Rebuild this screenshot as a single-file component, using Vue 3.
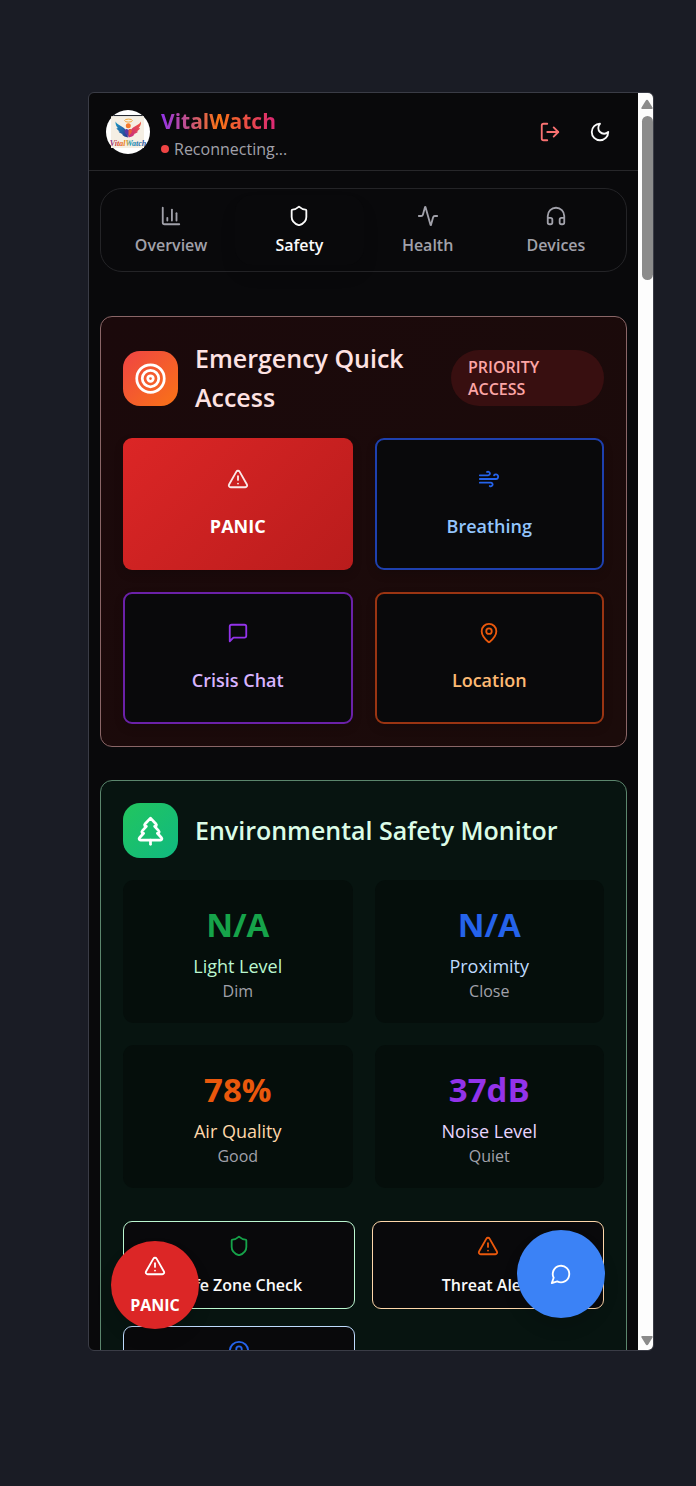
<script setup>
import { h, ref } from 'vue'

const paths = {
  chart: ['M3 3v16a2 2 0 0 0 2 2h16', 'M18 17V9', 'M13 17V5', 'M8 17v-3'],
  shield: ['M20 13c0 5-3.5 7.5-7.66 8.95a1 1 0 0 1-.67-.01C7.5 20.5 4 18 4 13V6a1 1 0 0 1 1-1c2 0 4.5-1.2 6.24-2.72a1.17 1.17 0 0 1 1.52 0C14.51 3.81 17 5 19 5a1 1 0 0 1 1 1z'],
  activity: ['M22 12h-2.48a2 2 0 0 0-1.93 1.46l-2.35 8.36a.25.25 0 0 1-.48 0L9.24 2.18a.25.25 0 0 0-.48 0l-2.35 8.36A2 2 0 0 1 4.49 12H2'],
  headphones: ['M3 14h3a2 2 0 0 1 2 2v3a2 2 0 0 1-2 2H5a2 2 0 0 1-2-2v-7a9 9 0 0 1 18 0v7a2 2 0 0 1-2 2h-1a2 2 0 0 1-2-2v-3a2 2 0 0 1 2-2h3'],
  target: ['M2 12a10 10 0 1 0 20 0a10 10 0 1 0-20 0', 'M6 12a6 6 0 1 0 12 0a6 6 0 1 0-12 0', 'M10 12a2 2 0 1 0 4 0a2 2 0 1 0-4 0'],
  tree: ['m17 14 3 3.3a1 1 0 0 1-.7 1.7H4.7a1 1 0 0 1-.7-1.7L7 14h-.3a1 1 0 0 1-.7-1.7L9 9h-.2A1 1 0 0 1 8 7.3L12 3l4 4.3a1 1 0 0 1-.8 1.7H15l3 3.3a1 1 0 0 1-.7 1.7H17Z', 'M12 22v-3'],
  wind: ['M12.8 19.6A2 2 0 1 0 14 16H2', 'M17.5 8a2.5 2.5 0 1 1 2 4H2', 'M9.8 4.4A2 2 0 1 1 11 8H2'],
  message: ['M21 15a2 2 0 0 1-2 2H7l-4 4V5a2 2 0 0 1 2-2h14a2 2 0 0 1 2 2z'],
  pin: ['M20 10c0 4.993-5.539 10.193-7.399 11.799a1 1 0 0 1-1.202 0C9.539 20.193 4 14.993 4 10a8 8 0 0 1 16 0', 'M9 10a3 3 0 1 0 6 0a3 3 0 1 0-6 0'],
  alert: ['m21.73 18-8-14a2 2 0 0 0-3.48 0l-8 14A2 2 0 0 0 4 21h16a2 2 0 0 0 1.73-3', 'M12 9v4', 'M12 17h.01'],
  bubble: ['M7.9 20A9 9 0 1 0 4 16.1L2 22Z'],
  logout: ['M9 21H5a2 2 0 0 1-2-2V5a2 2 0 0 1 2-2h4', 'm16 17 5-5-5-5', 'M21 12H9'],
  moon: ['M12 3a6 6 0 0 0 9 9 9 9 0 1 1-9-9Z'],
  user: ['M2 12a10 10 0 1 0 20 0a10 10 0 1 0-20 0', 'M9 10a3 3 0 1 0 6 0a3 3 0 1 0-6 0', 'M7 20.7V19a2 2 0 0 1 2-2h6a2 2 0 0 1 2 2v1.7'],
}

const Icon = (props) =>
  h(
    'svg',
    {
      viewBox: '0 0 24 24',
      width: props.size || 22,
      height: props.size || 22,
      fill: 'none',
      stroke: 'currentColor',
      'stroke-width': 2,
      'stroke-linecap': 'round',
      'stroke-linejoin': 'round',
      'aria-hidden': 'true',
    },
    paths[props.name].map((d) => h('path', { d })),
  )
Icon.props = ['name', 'size']

const active = ref('Safety')
const tabs = [
  { label: 'Overview', icon: 'chart' },
  { label: 'Safety', icon: 'shield' },
  { label: 'Health', icon: 'activity' },
  { label: 'Devices', icon: 'headphones' },
]
const actions = [
  { label: 'PANIC', icon: 'alert', tone: 'panic' },
  { label: 'Breathing', icon: 'wind', tone: 'blue' },
  { label: 'Crisis Chat', icon: 'message', tone: 'purple' },
  { label: 'Location', icon: 'pin', tone: 'orange' },
]
const stats = [
  { value: 'N/A', label: 'Light Level', note: 'Dim', tone: 'green' },
  { value: 'N/A', label: 'Proximity', note: 'Close', tone: 'blue' },
  { value: '78%', label: 'Air Quality', note: 'Good', tone: 'orange' },
  { value: '37dB', label: 'Noise Level', note: 'Quiet', tone: 'purple' },
]
</script>

<template>
  <div class="page">
    <div class="frame">
      <div class="screen">
        <header class="topbar">
          <svg class="logo" viewBox="0 0 44 44" role="img" aria-label="VitalWatch logo">
            <defs>
              <linearGradient id="lw" x1="0" y1="0" x2="1" y2="1">
                <stop offset="0" stop-color="#1e9bc4" /><stop offset="1" stop-color="#27368f" />
              </linearGradient>
              <linearGradient id="rw" x1="1" y1="0" x2="0" y2="1">
                <stop offset="0" stop-color="#f4573c" /><stop offset="1" stop-color="#c42a86" />
              </linearGradient>
              <linearGradient id="wm" x1="0" y1="0" x2="1" y2="0">
                <stop offset="0" stop-color="#7a3295" /><stop offset=".25" stop-color="#e0502c" />
                <stop offset=".45" stop-color="#ee9a24" /><stop offset=".55" stop-color="#1f9ab8" />
                <stop offset="1" stop-color="#2f4a9c" />
              </linearGradient>
            </defs>
            <circle cx="22" cy="22" r="22" fill="#fff" />
            <path d="M8 5h28l1 1.200H7z" fill="#262a33" />
            <path d="M5 6.200h33V38H5z" fill="#f5efe4" />
            <ellipse cx="22.500" cy="10.600" rx="3.800" ry="1.500" fill="none" stroke="#f2a93b" />
            <circle cx="22.300" cy="15.800" r="2.500" fill="#f47a2c" />
            <path d="M9.500 11.500c2 3.500 6 4 9 7 2 2 3 5 3.500 9-2.500-.3-5-1.500-6-3l1-.5c-2-.3-3.800-1.200-4.500-2.500l1.500-.2c-2-.7-3.200-2-3.500-3.300l1.500.2c-1.700-1.700-2.700-4-2.500-6.700z" fill="url(#lw)" />
            <path d="M35 11.500c-2 3.500-6 4-9 7-2 2-3 5-3.500 9 2.500-.3 5-1.500 6-3l-1-.5c2-.3 3.800-1.200 4.500-2.500l-1.500-.2c2-.7 3.200-2 3.500-3.300l-1.500.2c1.700-1.700 2.700-4 2.500-6.700z" fill="url(#rw)" />
            <path d="M22.300 20c2-2.200 4.200 0 3.300 2.200-.7 1.700-2.300 2.600-3.300 4.800-1-2.200-3-3-3.600-4.800-.7-2.200 1.600-4.400 3.600-2.200z" fill="#5a3aa5" />
            <path d="M22.500 20c2-2.200 4.200 0 3.300 2.200-.7 1.700-2.300 2.600-3.300 4.800z" fill="#ef5b3a" />
            <text x="22" y="36" text-anchor="middle" class="logo-text" fill="url(#wm)">VitalWatch</text>
          </svg>
          <div class="brand">
            <h1 class="brand-name">VitalWatch</h1>
            <p class="status"><span class="dot"></span>Reconnecting...</p>
          </div>
          <button class="icon-btn logout" type="button" aria-label="Log out"><Icon name="logout" /></button>
          <button class="icon-btn" type="button" aria-label="Toggle theme"><Icon name="moon" /></button>
        </header>

        <main class="content">
          <nav class="tabs" aria-label="Sections">
            <button
              v-for="t in tabs"
              :key="t.label"
              type="button"
              class="tab"
              :class="{ active: active === t.label }"
              @click="active = t.label"
            >
              <Icon :name="t.icon" />
              <span>{{ t.label }}</span>
            </button>
          </nav>

          <section class="card emergency">
            <div class="card-head">
              <span class="badge-icon"><Icon name="target" :size="33" /></span>
              <h2 class="card-title">Emergency Quick Access</h2>
              <span class="pill">PRIORITY ACCESS</span>
            </div>
            <div class="grid">
              <button v-for="a in actions" :key="a.label" type="button" class="action" :class="a.tone">
                <Icon :name="a.icon" />
                <span class="action-label">{{ a.label }}</span>
              </button>
            </div>
          </section>

          <section class="card environment">
            <div class="card-head">
              <span class="badge-icon"><Icon name="tree" :size="33" /></span>
              <h2 class="card-title">Environmental Safety Monitor</h2>
            </div>
            <div class="grid">
              <div v-for="s in stats" :key="s.label" class="stat" :class="s.tone">
                <div class="stat-value">{{ s.value }}</div>
                <div class="stat-label">{{ s.label }}</div>
                <div class="stat-note">{{ s.note }}</div>
              </div>
            </div>
            <div class="checks">
              <button type="button" class="check green"><Icon name="shield" /><span>Safe Zone Check</span></button>
              <button type="button" class="check orange"><Icon name="alert" /><span>Threat Alert</span></button>
              <button type="button" class="check blue" aria-label="Contacts"><Icon name="user" /><span></span></button>
            </div>
          </section>
        </main>

        <button type="button" class="float float-panic"><Icon name="alert" /><span>PANIC</span></button>
        <button type="button" class="float float-chat" aria-label="Open chat"><Icon name="bubble" /></button>
      </div>

      <div class="scrollbar" aria-hidden="true">
        <svg class="arrow" viewBox="0 0 12 10"><path d="M1 10Q0 10 .5 8.500L4.500 2Q6-.5 7.500 2L11.500 8.500Q12 10 11 10z" fill="#8b8b8b" /></svg>
        <div class="thumb"></div>
        <svg class="arrow down" viewBox="0 0 12 10"><path d="M1 0Q0 0 .5 1.500L4.500 8Q6 10.500 7.500 8L11.500 1.500Q12 0 11 0z" fill="#8b8b8b" /></svg>
      </div>
    </div>
  </div>
</template>

<style>
body {
  margin: 0;
  background: #1a1c25;
}
</style>

<style scoped>
.page {
  box-sizing: border-box;
  height: 100vh;
  padding: 92px 42px 135px 88px;
  background: #1a1c25;
  font-family: "Open Sans", "Noto Sans", sans-serif;
  color: #fafafa;
}
.page * {
  box-sizing: border-box;
}
h1, h2, p {
  margin: 0;
}
button {
  margin: 0;
  padding: 0;
  border: 0;
  background: none;
  color: inherit;
  font: inherit;
  cursor: pointer;
}
.page svg {
  display: block;
  flex: none;
}
.frame {
  display: flex;
  height: 100%;
  border: 1px solid #3a3c46;
  border-radius: 6px;
  overflow: hidden;
  background: #09090b;
}
.screen {
  position: relative;
  flex: 1;
  min-width: 0;
  overflow: hidden;
}
.scrollbar {
  display: flex;
  flex-direction: column;
  align-items: flex-end;
  width: 15px;
  padding: 6px 0 4px;
  background: #fdfdfd;
}
.arrow {
  width: 12px;
  height: 10px;
}
.arrow.down {
  margin-top: auto;
}
.thumb {
  width: 11px;
  height: 164px;
  margin-top: 7px;
  border-radius: 6px;
  background: #8b8b8b;
}

.topbar {
  display: flex;
  align-items: center;
  height: 78px;
  padding: 0 16px 0 17px;
  border-bottom: 1px solid #27272a;
}
.logo {
  width: 44px;
  height: 44px;
}
.logo-text {
  font: italic 700 8px "Liberation Serif", serif;
}
.brand {
  flex: 1;
  margin-left: 11px;
  padding-top: 3px;
}
.brand-name {
  width: max-content;
  font-size: 21px;
  line-height: 30px;
  font-weight: 700;
  background: linear-gradient(90deg, #9333ea, #f97316 50%, #db2777);
  background-clip: text;
  -webkit-background-clip: text;
  color: transparent;
}
.status {
  display: flex;
  align-items: center;
  gap: 5px;
  margin-top: 1px;
  font-size: 16px;
  line-height: 24px;
  color: #a1a1aa;
}
.dot {
  width: 8px;
  height: 8px;
  border-radius: 50%;
  background: #ef4444;
}
.icon-btn {
  display: grid;
  place-items: center;
  width: 44px;
  height: 44px;
}
.icon-btn + .icon-btn {
  margin-left: 6px;
}
.logout {
  color: #f87171;
}

.content {
  padding: 17px 11px;
}
.tabs {
  display: grid;
  grid-template-columns: repeat(4, 1fr);
  height: 84px;
  margin-bottom: 44px;
  padding: 6px;
  border: 1px solid #242427;
  border-radius: 22px;
}
.tab {
  display: flex;
  flex-direction: column;
  align-items: center;
  justify-content: center;
  gap: 7px;
  border-radius: 17px;
  font-size: 16px;
  line-height: 22px;
  font-weight: 600;
  color: #a1a1aa;
}
.tab.active {
  color: #fafafa;
  background: #09090b;
  box-shadow: 0 10px 16px rgba(0, 0, 0, 0.1);
}

.card {
  padding: 22px;
  border: 1px solid;
  border-radius: 12px;
}
.card + .card {
  margin-top: 33px;
}
.emergency {
  border-color: #8a6667;
  background: linear-gradient(135deg, #1b090b, #1b0b0a);
}
.environment {
  min-height: 900px;
  border-color: #5b866d;
  background: #071410;
}
.card-head {
  display: flex;
  align-items: center;
  margin-bottom: 22px;
}
.emergency .card-head {
  margin-bottom: 21px;
}
.badge-icon {
  display: grid;
  place-items: center;
  flex: none;
  width: 55px;
  height: 55px;
  margin-right: 17px;
  border-radius: 17px;
  color: #fff;
}
.emergency .badge-icon {
  background: linear-gradient(135deg, #ef4444, #f97316);
}
.environment .badge-icon {
  background: linear-gradient(135deg, #22c55e, #10b981);
}
.card-title {
  flex: 1;
  font-size: 25px;
  line-height: 39px;
  font-weight: 600;
}
.emergency .card-title {
  color: #fee2e2;
}
.environment .card-title {
  color: #dcfce7;
}
.pill {
  flex: 0 0 153px;
  padding: 6px 17px;
  border-radius: 28px;
  background: #380f10;
  color: #fca5a5;
  font-size: 16px;
  line-height: 22px;
  font-weight: 600;
}
.grid {
  display: grid;
  grid-template-columns: 1fr 1fr;
  gap: 22px;
}
.action {
  display: flex;
  flex-direction: column;
  align-items: center;
  justify-content: center;
  gap: 22px;
  height: 132px;
  border: 2px solid;
  border-radius: 9px;
  background: #09090b;
  box-shadow: 0 4px 10px rgba(0, 0, 0, 0.15);
}
.action-label {
  font-size: 18px;
  line-height: 28px;
  font-weight: 600;
}
.action.panic {
  border: 0;
  background: linear-gradient(135deg, #dc2626, #b91c1c);
  color: #fff;
}
.action.panic svg {
  opacity: 0.9;
}
.panic .action-label {
  font-weight: 700;
}
.action.blue { border-color: #1e40af; color: #2563eb; }
.action.blue .action-label { color: #93c5fd; }
.action.purple { border-color: #6b21a8; color: #9333ea; }
.action.purple .action-label { color: #d8b4fe; }
.action.orange { border-color: #9a3412; color: #ea580c; }
.action.orange .action-label { color: #fdba74; }

.stat {
  padding: 23px 22px 21px;
  border-radius: 11px;
  background: #050e0b;
  text-align: center;
}
.stat-value {
  margin-bottom: 6px;
  font-size: 33px;
  line-height: 44px;
  font-weight: 700;
}
.stat-label {
  font-size: 18px;
  line-height: 27px;
}
.stat-note {
  font-size: 16px;
  line-height: 22px;
  color: #a1a1aa;
}
.stat.green .stat-value { color: #16a34a; }
.stat.green .stat-label { color: #bbf7d0; }
.stat.blue .stat-value { color: #2563eb; }
.stat.blue .stat-label { color: #bfdbfe; }
.stat.orange .stat-value { color: #ea580c; }
.stat.orange .stat-label { color: #fed7aa; }
.stat.purple .stat-value { color: #9333ea; }
.stat.purple .stat-label { color: #e9d5ff; }

.checks {
  display: grid;
  grid-template-columns: 1fr 1fr;
  gap: 17px;
  margin-top: 33px;
}
.check {
  display: flex;
  flex-direction: column;
  align-items: center;
  justify-content: center;
  gap: 17px;
  height: 88px;
  border: 1px solid;
  border-radius: 9px;
  background: #09090b;
  font-size: 16px;
  line-height: 22px;
  font-weight: 600;
}
.check span {
  min-height: 22px;
  color: #fafafa;
}
.check.green { border-color: #bbf7d0; color: #16a34a; }
.check.orange { border-color: #fed7aa; color: #ea580c; }
.check.blue { border-color: #bfdbfe; color: #2563eb; }

.float {
  position: absolute;
  display: flex;
  flex-direction: column;
  align-items: center;
  justify-content: center;
  gap: 17px;
  width: 88px;
  height: 88px;
  border-radius: 50%;
  color: #fff;
  font-size: 16px;
  line-height: 22px;
  font-weight: 700;
  box-shadow: 0 10px 16px rgba(0, 0, 0, 0.12);
}
.float-panic {
  left: 22px;
  bottom: 21px;
  background: #dc2626;
}
.float-chat {
  right: 33px;
  bottom: 32px;
  background: #3b82f6;
}
</style>
